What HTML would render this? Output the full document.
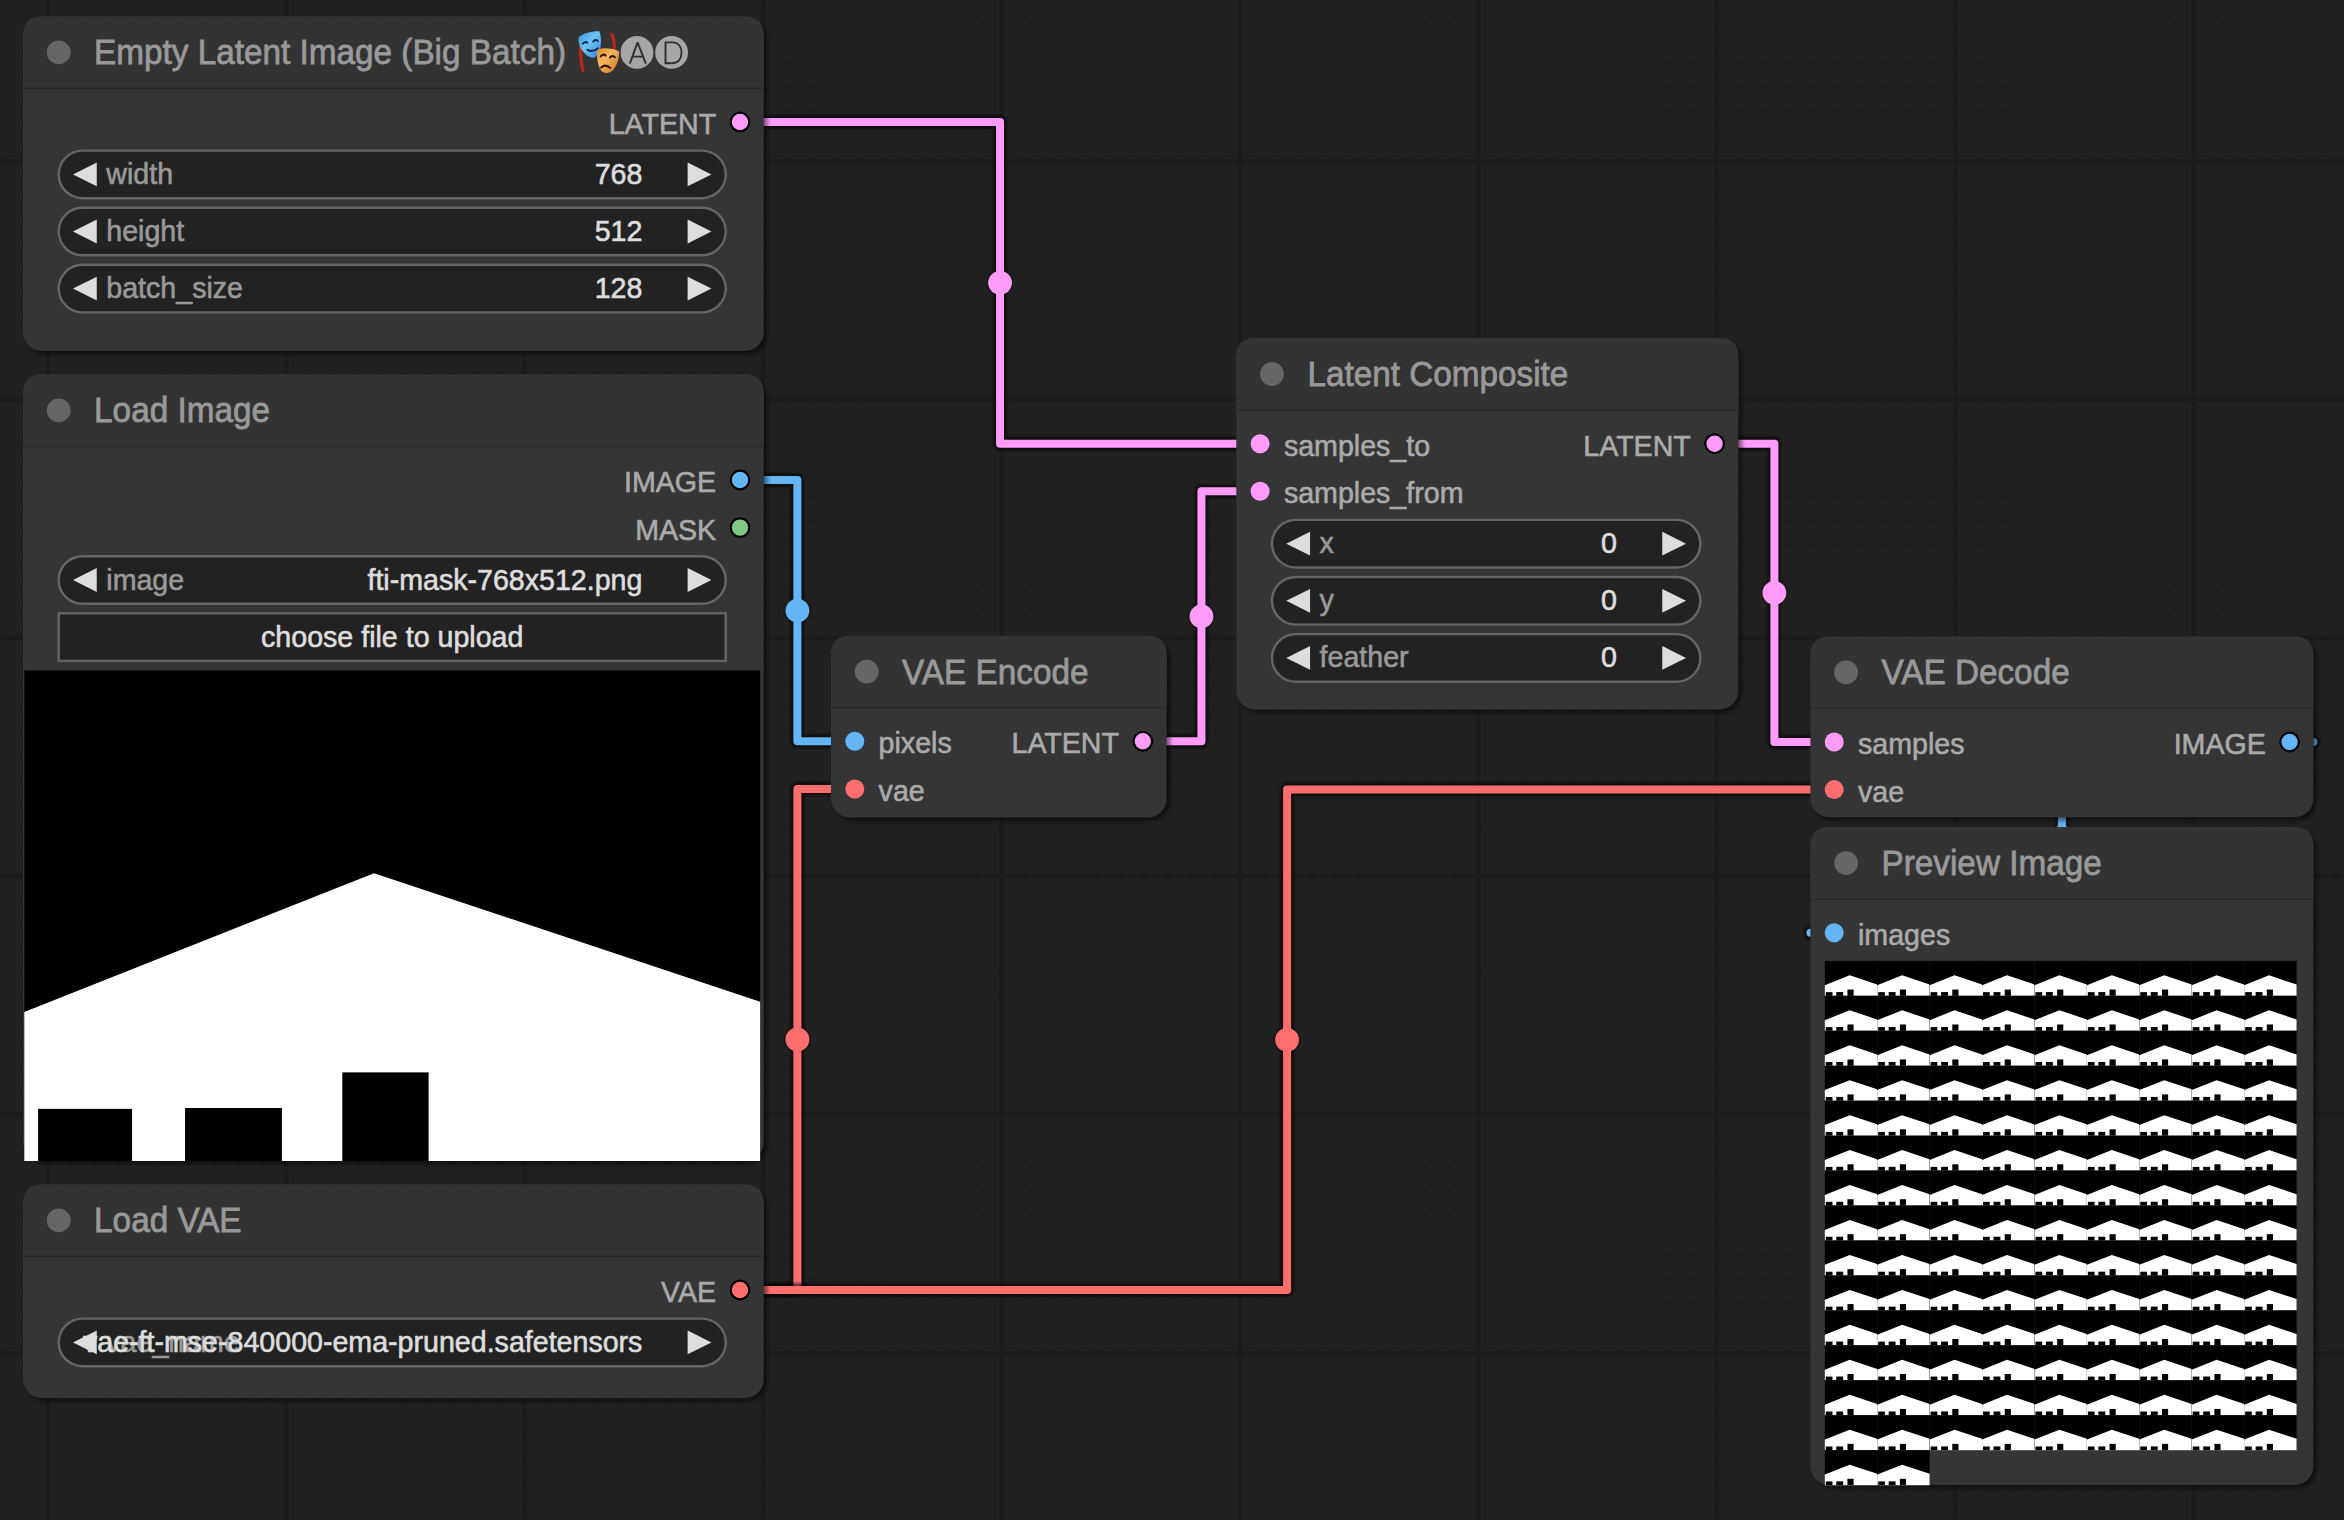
<!DOCTYPE html><html><head><meta charset="utf-8"><style>
html,body{margin:0;padding:0;width:2344px;height:1520px;overflow:hidden;background:#212121;}
body{position:relative;font-family:"Liberation Sans",sans-serif;}
.abs{position:absolute;}
.node{position:absolute;background:#353535;border-radius:19px;box-shadow:4px 4px 5px rgba(0,0,0,0.5);overflow:hidden;}
.ttl{position:absolute;left:0;top:0;right:0;background:#333333;border-bottom:2px solid #2c2c2c;box-sizing:border-box;}
.t{position:absolute;white-space:pre;line-height:1;}
svg{position:absolute;left:0;top:0;overflow:visible;}
</style></head><body>
<svg width="2344" height="1520" style="position:absolute;left:0;top:0">
<defs><filter id="ns" x="-10%" y="-10%" width="120%" height="120%"><feGaussianBlur stdDeviation="2.2"/></filter><pattern id="dots" x="44.5" y="157.5" width="23.84" height="23.84" patternUnits="userSpaceOnUse"><rect x="0" y="0" width="7" height="7" fill="#1c1c1c"/></pattern></defs>
<rect x="0" y="0" width="2344" height="1520" fill="url(#dots)" opacity="0.4"/>
<rect x="46" y="0" width="4" height="1520" fill="#1c1c1c"/>
<rect x="284.4" y="0" width="4" height="1520" fill="#1c1c1c"/>
<rect x="522.8" y="0" width="4" height="1520" fill="#1c1c1c"/>
<rect x="761.2" y="0" width="4" height="1520" fill="#1c1c1c"/>
<rect x="999.6" y="0" width="4" height="1520" fill="#1c1c1c"/>
<rect x="1238" y="0" width="4" height="1520" fill="#1c1c1c"/>
<rect x="1476.4" y="0" width="4" height="1520" fill="#1c1c1c"/>
<rect x="1714.8" y="0" width="4" height="1520" fill="#1c1c1c"/>
<rect x="1953.2" y="0" width="4" height="1520" fill="#1c1c1c"/>
<rect x="2191.6" y="0" width="4" height="1520" fill="#1c1c1c"/>
<rect x="0" y="159" width="2344" height="4" fill="#1c1c1c"/>
<rect x="0" y="397.4" width="2344" height="4" fill="#1c1c1c"/>
<rect x="0" y="635.8" width="2344" height="4" fill="#1c1c1c"/>
<rect x="0" y="874.2" width="2344" height="4" fill="#1c1c1c"/>
<rect x="0" y="1112.6" width="2344" height="4" fill="#1c1c1c"/>
<rect x="0" y="1351" width="2344" height="4" fill="#1c1c1c"/>
</svg>
<svg width="2344" height="1520"><defs><filter id="lb" x="-5%" y="-5%" width="110%" height="110%"><feGaussianBlur stdDeviation="0.9"/></filter></defs>
<g filter="url(#lb)"><path d="M740 122.02 L763.8 122.02 L1000.05 122.02 L1000.05 443.72 L1236.3 443.72 L1260.1 443.72" fill="none" stroke="rgba(0,0,0,0.55)" stroke-width="14" stroke-linejoin="round"/><circle cx="1000.05" cy="282.87" r="13.3" fill="rgba(0,0,0,0.35)"/></g>
<path d="M740 122.02 L763.8 122.02 L1000.05 122.02 L1000.05 443.72 L1236.3 443.72 L1260.1 443.72" fill="none" stroke="#ff9cf9" stroke-width="8" stroke-linejoin="round"/>
<circle cx="1000.05" cy="282.87" r="11.9" fill="#ff9cf9"/>
<g filter="url(#lb)"><path d="M740 480.02 L763.8 480.02 L797.4 480.02 L797.4 741.32 L831 741.32 L854.8 741.32" fill="none" stroke="rgba(0,0,0,0.55)" stroke-width="14" stroke-linejoin="round"/><circle cx="797.4" cy="610.67" r="13.3" fill="rgba(0,0,0,0.35)"/></g>
<path d="M740 480.02 L763.8 480.02 L797.4 480.02 L797.4 741.32 L831 741.32 L854.8 741.32" fill="none" stroke="#64b5f6" stroke-width="8" stroke-linejoin="round"/>
<circle cx="797.4" cy="610.67" r="11.9" fill="#64b5f6"/>
<g filter="url(#lb)"><path d="M740 1290.02 L763.8 1290.02 L797.4 1290.02 L797.4 788.92 L831 788.92 L854.8 788.92" fill="none" stroke="rgba(0,0,0,0.55)" stroke-width="14" stroke-linejoin="round"/><circle cx="797.4" cy="1039.47" r="13.3" fill="rgba(0,0,0,0.35)"/></g>
<path d="M740 1290.02 L763.8 1290.02 L797.4 1290.02 L797.4 788.92 L831 788.92 L854.8 788.92" fill="none" stroke="#ff6e6e" stroke-width="8" stroke-linejoin="round"/>
<circle cx="797.4" cy="1039.47" r="11.9" fill="#ff6e6e"/>
<g filter="url(#lb)"><path d="M740 1290.02 L763.8 1290.02 L1287.1 1290.02 L1287.1 789.62 L1810.4 789.62 L1834.2 789.62" fill="none" stroke="rgba(0,0,0,0.55)" stroke-width="14" stroke-linejoin="round"/><circle cx="1287.1" cy="1039.82" r="13.3" fill="rgba(0,0,0,0.35)"/></g>
<path d="M740 1290.02 L763.8 1290.02 L1287.1 1290.02 L1287.1 789.62 L1810.4 789.62 L1834.2 789.62" fill="none" stroke="#ff6e6e" stroke-width="8" stroke-linejoin="round"/>
<circle cx="1287.1" cy="1039.82" r="11.9" fill="#ff6e6e"/>
<g filter="url(#lb)"><path d="M1142.8 741.32 L1166.6 741.32 L1201.45 741.32 L1201.45 491.32 L1236.3 491.32 L1260.1 491.32" fill="none" stroke="rgba(0,0,0,0.55)" stroke-width="14" stroke-linejoin="round"/><circle cx="1201.45" cy="616.32" r="13.3" fill="rgba(0,0,0,0.35)"/></g>
<path d="M1142.8 741.32 L1166.6 741.32 L1201.45 741.32 L1201.45 491.32 L1236.3 491.32 L1260.1 491.32" fill="none" stroke="#ff9cf9" stroke-width="8" stroke-linejoin="round"/>
<circle cx="1201.45" cy="616.32" r="11.9" fill="#ff9cf9"/>
<g filter="url(#lb)"><path d="M1714.6 443.72 L1738.4 443.72 L1774.4 443.72 L1774.4 742.02 L1810.4 742.02 L1834.2 742.02" fill="none" stroke="rgba(0,0,0,0.55)" stroke-width="14" stroke-linejoin="round"/><circle cx="1774.4" cy="592.87" r="13.3" fill="rgba(0,0,0,0.35)"/></g>
<path d="M1714.6 443.72 L1738.4 443.72 L1774.4 443.72 L1774.4 742.02 L1810.4 742.02 L1834.2 742.02" fill="none" stroke="#ff9cf9" stroke-width="8" stroke-linejoin="round"/>
<circle cx="1774.4" cy="592.87" r="11.9" fill="#ff9cf9"/>
<g filter="url(#lb)"><path d="M2289.6 742.02 L2313.4 742.02 L2061.9 742.02 L2061.9 932.72 L1810.4 932.72 L1834.2 932.72" fill="none" stroke="rgba(0,0,0,0.55)" stroke-width="14" stroke-linejoin="round"/><circle cx="2061.9" cy="837.37" r="13.3" fill="rgba(0,0,0,0.35)"/></g>
<path d="M2289.6 742.02 L2313.4 742.02 L2061.9 742.02 L2061.9 932.72 L1810.4 932.72 L1834.2 932.72" fill="none" stroke="#64b5f6" stroke-width="8" stroke-linejoin="round"/>
<circle cx="2061.9" cy="837.37" r="11.9" fill="#64b5f6"/>
</svg>
<svg width="1" height="1">
<rect x="26.5" y="19.9" width="740.8" height="334.6" rx="19" fill="rgba(0,0,0,0.5)" filter="url(#ns)"/>
<rect x="23" y="16.4" width="740.8" height="334.6" rx="19" fill="#353535"/>
<path d="M23 88.7 L23 35.4 L23 35.4 Q23 16.4 42 16.4 L744.8 16.4 Q763.8 16.4 763.8 35.4 Z" fill="#333333"/>
<path d="M23 35.4 L763.8 35.4 L763.8 88.7 L23 88.7 Z" fill="#333333"/>
<rect x="23" y="87.5" width="740.8" height="2" fill="#2c2c2c"/>
</svg>
<svg width="1" height="1"><circle cx="58.7" cy="52.4" r="11.9" fill="#666"/></svg>
<svg width="1" height="1"><g transform="translate(94.1 64.3) scale(1 1.04)"><text x="0" y="0" font-family="Liberation Sans" font-size="33.3" fill="#999999" stroke="#999999" stroke-width="0.75" text-anchor="start" >Empty Latent Image (Big Batch)</text></g></svg>
<svg width="1" height="1"><circle cx="740" cy="122.02" r="9.3" fill="#ff9cf9" stroke="#000" stroke-width="2.2"/></svg>
<svg width="1" height="1"><text x="716.2" y="133.92" font-family="Liberation Sans" font-size="28.6" fill="#aaaaaa" stroke="#aaaaaa" stroke-width="0.6" text-anchor="end" >LATENT</text></svg>
<svg width="1" height="1">
<rect x="58.7" y="150.58" width="667.02" height="47.6" rx="23.8" fill="#222222" stroke="#666666" stroke-width="2.4"/>
<path d="M96.78 162.48 L72.98 174.38 L96.78 186.28 Z" fill="#dddddd"/>
<path d="M687.64 162.48 L711.44 174.38 L687.64 186.28 Z" fill="#dddddd"/>
</svg>
<svg width="1" height="1"><text x="106.3" y="183.9" font-family="Liberation Sans" font-size="28.6" fill="#999999" stroke="#999999" stroke-width="0.6" text-anchor="start" >width</text></svg>
<svg width="1" height="1"><text x="642.42" y="183.9" font-family="Liberation Sans" font-size="28.6" fill="#dddddd" stroke="#dddddd" stroke-width="0.6" text-anchor="end" >768</text></svg>
<svg width="1" height="1">
<rect x="58.7" y="207.7" width="667.02" height="47.6" rx="23.8" fill="#222222" stroke="#666666" stroke-width="2.4"/>
<path d="M96.78 219.6 L72.98 231.5 L96.78 243.4 Z" fill="#dddddd"/>
<path d="M687.64 219.6 L711.44 231.5 L687.64 243.4 Z" fill="#dddddd"/>
</svg>
<svg width="1" height="1"><text x="106.3" y="241.02" font-family="Liberation Sans" font-size="28.6" fill="#999999" stroke="#999999" stroke-width="0.6" text-anchor="start" >height</text></svg>
<svg width="1" height="1"><text x="642.42" y="241.02" font-family="Liberation Sans" font-size="28.6" fill="#dddddd" stroke="#dddddd" stroke-width="0.6" text-anchor="end" >512</text></svg>
<svg width="1" height="1">
<rect x="58.7" y="264.82" width="667.02" height="47.6" rx="23.8" fill="#222222" stroke="#666666" stroke-width="2.4"/>
<path d="M96.78 276.72 L72.98 288.62 L96.78 300.52 Z" fill="#dddddd"/>
<path d="M687.64 276.72 L711.44 288.62 L687.64 300.52 Z" fill="#dddddd"/>
</svg>
<svg width="1" height="1"><text x="106.3" y="298.14" font-family="Liberation Sans" font-size="28.6" fill="#999999" stroke="#999999" stroke-width="0.6" text-anchor="start" >batch_size</text></svg>
<svg width="1" height="1"><text x="642.42" y="298.14" font-family="Liberation Sans" font-size="28.6" fill="#dddddd" stroke="#dddddd" stroke-width="0.6" text-anchor="end" >128</text></svg>
<svg width="1" height="1">
<rect x="26.5" y="377.9" width="740.8" height="786.6" rx="19" fill="rgba(0,0,0,0.5)" filter="url(#ns)"/>
<rect x="23" y="374.4" width="740.8" height="786.6" rx="19" fill="#353535"/>
<path d="M23 446.7 L23 393.4 L23 393.4 Q23 374.4 42 374.4 L744.8 374.4 Q763.8 374.4 763.8 393.4 Z" fill="#333333"/>
<path d="M23 393.4 L763.8 393.4 L763.8 446.7 L23 446.7 Z" fill="#333333"/>
<rect x="23" y="445.5" width="740.8" height="2" fill="#2c2c2c"/>
</svg>
<svg width="1" height="1"><circle cx="58.7" cy="410.4" r="11.9" fill="#666"/></svg>
<svg width="1" height="1"><g transform="translate(94.1 422.3) scale(1 1.04)"><text x="0" y="0" font-family="Liberation Sans" font-size="33.3" fill="#999999" stroke="#999999" stroke-width="0.75" text-anchor="start" >Load Image</text></g></svg>
<svg width="1" height="1"><circle cx="740" cy="480.02" r="9.3" fill="#64b5f6" stroke="#000" stroke-width="2.2"/></svg>
<svg width="1" height="1"><text x="716.2" y="491.92" font-family="Liberation Sans" font-size="28.6" fill="#aaaaaa" stroke="#aaaaaa" stroke-width="0.6" text-anchor="end" >IMAGE</text></svg>
<svg width="1" height="1"><circle cx="740" cy="527.62" r="9.3" fill="#81c784" stroke="#000" stroke-width="2.2"/></svg>
<svg width="1" height="1"><text x="716.2" y="539.52" font-family="Liberation Sans" font-size="28.6" fill="#aaaaaa" stroke="#aaaaaa" stroke-width="0.6" text-anchor="end" >MASK</text></svg>
<svg width="1" height="1">
<rect x="58.7" y="556.18" width="667.02" height="47.6" rx="23.8" fill="#222222" stroke="#666666" stroke-width="2.4"/>
<path d="M96.78 568.08 L72.98 579.98 L96.78 591.88 Z" fill="#dddddd"/>
<path d="M687.64 568.08 L711.44 579.98 L687.64 591.88 Z" fill="#dddddd"/>
</svg>
<svg width="1" height="1"><text x="106.3" y="589.5" font-family="Liberation Sans" font-size="28.6" fill="#999999" stroke="#999999" stroke-width="0.6" text-anchor="start" >image</text></svg>
<svg width="1" height="1"><text x="642.42" y="589.5" font-family="Liberation Sans" font-size="28.6" fill="#dddddd" stroke="#dddddd" stroke-width="0.6" text-anchor="end" >fti-mask-768x512.png</text></svg>
<svg width="1" height="1"><rect x="58.7" y="613.3" width="667.02" height="47.6" fill="#222222" stroke="#666666" stroke-width="2.4"/></svg>
<svg width="1" height="1"><text x="392.21" y="646.62" font-family="Liberation Sans" font-size="28.6" fill="#dddddd" stroke="#dddddd" stroke-width="0.6" text-anchor="middle" >choose file to upload</text></svg>
<svg width="1" height="1"><g transform="translate(24.27 670.42) scale(0.95816)"><rect x="0" y="0" width="768" height="512" fill="#000"/><path d="M0 356.5 L365 211.7 L768 345.7 L768 512 L0 512 Z" fill="#fff"/><rect x="14.4" y="457.6" width="98.1" height="54.4" fill="#000"/><rect x="167.8" y="456.7" width="101.1" height="55.3" fill="#000"/><rect x="331.9" y="419.5" width="90.1" height="92.5" fill="#000"/></g></svg>
<svg width="1" height="1">
<rect x="26.5" y="1187.9" width="740.8" height="213.6" rx="19" fill="rgba(0,0,0,0.5)" filter="url(#ns)"/>
<rect x="23" y="1184.4" width="740.8" height="213.6" rx="19" fill="#353535"/>
<path d="M23 1256.7 L23 1203.4 L23 1203.4 Q23 1184.4 42 1184.4 L744.8 1184.4 Q763.8 1184.4 763.8 1203.4 Z" fill="#333333"/>
<path d="M23 1203.4 L763.8 1203.4 L763.8 1256.7 L23 1256.7 Z" fill="#333333"/>
<rect x="23" y="1255.5" width="740.8" height="2" fill="#2c2c2c"/>
</svg>
<svg width="1" height="1"><circle cx="58.7" cy="1220.4" r="11.9" fill="#666"/></svg>
<svg width="1" height="1"><g transform="translate(94.1 1232.3) scale(1 1.04)"><text x="0" y="0" font-family="Liberation Sans" font-size="33.3" fill="#999999" stroke="#999999" stroke-width="0.75" text-anchor="start" >Load VAE</text></g></svg>
<svg width="1" height="1"><circle cx="740" cy="1290.02" r="9.3" fill="#ff6e6e" stroke="#000" stroke-width="2.2"/></svg>
<svg width="1" height="1"><text x="716.2" y="1301.92" font-family="Liberation Sans" font-size="28.6" fill="#aaaaaa" stroke="#aaaaaa" stroke-width="0.6" text-anchor="end" >VAE</text></svg>
<svg width="1" height="1">
<rect x="58.7" y="1318.58" width="667.02" height="47.6" rx="23.8" fill="#222222" stroke="#666666" stroke-width="2.4"/>
<path d="M96.78 1330.48 L72.98 1342.38 L96.78 1354.28 Z" fill="#dddddd"/>
<path d="M687.64 1330.48 L711.44 1342.38 L687.64 1354.28 Z" fill="#dddddd"/>
</svg>
<svg width="1" height="1"><text x="106.3" y="1351.9" font-family="Liberation Sans" font-size="28.6" fill="#999999" stroke="#999999" stroke-width="0.6" text-anchor="start" >vae_name</text></svg>
<svg width="1" height="1"><text x="642.42" y="1351.9" font-family="Liberation Sans" font-size="28.6" fill="#dddddd" stroke="#dddddd" stroke-width="0.6" text-anchor="end" >vae-ft-mse-840000-ema-pruned.safetensors</text></svg>
<svg width="1" height="1">
<rect x="834.5" y="639.2" width="335.6" height="181.9" rx="19" fill="rgba(0,0,0,0.5)" filter="url(#ns)"/>
<rect x="831" y="635.7" width="335.6" height="181.9" rx="19" fill="#353535"/>
<path d="M831 708 L831 654.7 L831 654.7 Q831 635.7 850 635.7 L1147.6 635.7 Q1166.6 635.7 1166.6 654.7 Z" fill="#333333"/>
<path d="M831 654.7 L1166.6 654.7 L1166.6 708 L831 708 Z" fill="#333333"/>
<rect x="831" y="706.8" width="335.6" height="2" fill="#2c2c2c"/>
</svg>
<svg width="1" height="1"><circle cx="866.7" cy="671.7" r="11.9" fill="#666"/></svg>
<svg width="1" height="1"><g transform="translate(902.1 683.6) scale(1 1.04)"><text x="0" y="0" font-family="Liberation Sans" font-size="33.3" fill="#999999" stroke="#999999" stroke-width="0.75" text-anchor="start" >VAE Encode</text></g></svg>
<svg width="1" height="1"><circle cx="854.8" cy="741.32" r="9.5" fill="#64b5f6"/></svg>
<svg width="1" height="1"><text x="878.6" y="753.22" font-family="Liberation Sans" font-size="28.6" fill="#aaaaaa" stroke="#aaaaaa" stroke-width="0.6" text-anchor="start" >pixels</text></svg>
<svg width="1" height="1"><circle cx="854.8" cy="788.92" r="9.5" fill="#ff6e6e"/></svg>
<svg width="1" height="1"><text x="878.6" y="800.82" font-family="Liberation Sans" font-size="28.6" fill="#aaaaaa" stroke="#aaaaaa" stroke-width="0.6" text-anchor="start" >vae</text></svg>
<svg width="1" height="1"><circle cx="1142.8" cy="741.32" r="9.3" fill="#ff9cf9" stroke="#000" stroke-width="2.2"/></svg>
<svg width="1" height="1"><text x="1119" y="753.22" font-family="Liberation Sans" font-size="28.6" fill="#aaaaaa" stroke="#aaaaaa" stroke-width="0.6" text-anchor="end" >LATENT</text></svg>
<svg width="1" height="1">
<rect x="1239.8" y="341.6" width="502.1" height="371.4" rx="19" fill="rgba(0,0,0,0.5)" filter="url(#ns)"/>
<rect x="1236.3" y="338.1" width="502.1" height="371.4" rx="19" fill="#353535"/>
<path d="M1236.3 410.4 L1236.3 357.1 L1236.3 357.1 Q1236.3 338.1 1255.3 338.1 L1719.4 338.1 Q1738.4 338.1 1738.4 357.1 Z" fill="#333333"/>
<path d="M1236.3 357.1 L1738.4 357.1 L1738.4 410.4 L1236.3 410.4 Z" fill="#333333"/>
<rect x="1236.3" y="409.2" width="502.1" height="2" fill="#2c2c2c"/>
</svg>
<svg width="1" height="1"><circle cx="1272" cy="374.1" r="11.9" fill="#666"/></svg>
<svg width="1" height="1"><g transform="translate(1307.4 386) scale(1 1.04)"><text x="0" y="0" font-family="Liberation Sans" font-size="33.3" fill="#999999" stroke="#999999" stroke-width="0.75" text-anchor="start" >Latent Composite</text></g></svg>
<svg width="1" height="1"><circle cx="1260.1" cy="443.72" r="9.5" fill="#ff9cf9"/></svg>
<svg width="1" height="1"><text x="1283.9" y="455.62" font-family="Liberation Sans" font-size="28.6" fill="#aaaaaa" stroke="#aaaaaa" stroke-width="0.6" text-anchor="start" >samples_to</text></svg>
<svg width="1" height="1"><circle cx="1260.1" cy="491.32" r="9.5" fill="#ff9cf9"/></svg>
<svg width="1" height="1"><text x="1283.9" y="503.22" font-family="Liberation Sans" font-size="28.6" fill="#aaaaaa" stroke="#aaaaaa" stroke-width="0.6" text-anchor="start" >samples_from</text></svg>
<svg width="1" height="1"><circle cx="1714.6" cy="443.72" r="9.3" fill="#ff9cf9" stroke="#000" stroke-width="2.2"/></svg>
<svg width="1" height="1"><text x="1690.8" y="455.62" font-family="Liberation Sans" font-size="28.6" fill="#aaaaaa" stroke="#aaaaaa" stroke-width="0.6" text-anchor="end" >LATENT</text></svg>
<svg width="1" height="1">
<rect x="1272" y="519.88" width="428.32" height="47.6" rx="23.8" fill="#222222" stroke="#666666" stroke-width="2.4"/>
<path d="M1310.08 531.78 L1286.28 543.68 L1310.08 555.58 Z" fill="#dddddd"/>
<path d="M1662.24 531.78 L1686.04 543.68 L1662.24 555.58 Z" fill="#dddddd"/>
</svg>
<svg width="1" height="1"><text x="1319.6" y="553.2" font-family="Liberation Sans" font-size="28.6" fill="#999999" stroke="#999999" stroke-width="0.6" text-anchor="start" >x</text></svg>
<svg width="1" height="1"><text x="1617.02" y="553.2" font-family="Liberation Sans" font-size="28.6" fill="#dddddd" stroke="#dddddd" stroke-width="0.6" text-anchor="end" >0</text></svg>
<svg width="1" height="1">
<rect x="1272" y="577" width="428.32" height="47.6" rx="23.8" fill="#222222" stroke="#666666" stroke-width="2.4"/>
<path d="M1310.08 588.9 L1286.28 600.8 L1310.08 612.7 Z" fill="#dddddd"/>
<path d="M1662.24 588.9 L1686.04 600.8 L1662.24 612.7 Z" fill="#dddddd"/>
</svg>
<svg width="1" height="1"><text x="1319.6" y="610.32" font-family="Liberation Sans" font-size="28.6" fill="#999999" stroke="#999999" stroke-width="0.6" text-anchor="start" >y</text></svg>
<svg width="1" height="1"><text x="1617.02" y="610.32" font-family="Liberation Sans" font-size="28.6" fill="#dddddd" stroke="#dddddd" stroke-width="0.6" text-anchor="end" >0</text></svg>
<svg width="1" height="1">
<rect x="1272" y="634.12" width="428.32" height="47.6" rx="23.8" fill="#222222" stroke="#666666" stroke-width="2.4"/>
<path d="M1310.08 646.02 L1286.28 657.92 L1310.08 669.82 Z" fill="#dddddd"/>
<path d="M1662.24 646.02 L1686.04 657.92 L1662.24 669.82 Z" fill="#dddddd"/>
</svg>
<svg width="1" height="1"><text x="1319.6" y="667.44" font-family="Liberation Sans" font-size="28.6" fill="#999999" stroke="#999999" stroke-width="0.6" text-anchor="start" >feather</text></svg>
<svg width="1" height="1"><text x="1617.02" y="667.44" font-family="Liberation Sans" font-size="28.6" fill="#dddddd" stroke="#dddddd" stroke-width="0.6" text-anchor="end" >0</text></svg>
<svg width="1" height="1">
<rect x="1813.9" y="639.9" width="503" height="180.9" rx="19" fill="rgba(0,0,0,0.5)" filter="url(#ns)"/>
<rect x="1810.4" y="636.4" width="503" height="180.9" rx="19" fill="#353535"/>
<path d="M1810.4 708.7 L1810.4 655.4 L1810.4 655.4 Q1810.4 636.4 1829.4 636.4 L2294.4 636.4 Q2313.4 636.4 2313.4 655.4 Z" fill="#333333"/>
<path d="M1810.4 655.4 L2313.4 655.4 L2313.4 708.7 L1810.4 708.7 Z" fill="#333333"/>
<rect x="1810.4" y="707.5" width="503" height="2" fill="#2c2c2c"/>
</svg>
<svg width="1" height="1"><circle cx="1846.1" cy="672.4" r="11.9" fill="#666"/></svg>
<svg width="1" height="1"><g transform="translate(1881.5 684.3) scale(1 1.04)"><text x="0" y="0" font-family="Liberation Sans" font-size="33.3" fill="#999999" stroke="#999999" stroke-width="0.75" text-anchor="start" >VAE Decode</text></g></svg>
<svg width="1" height="1"><circle cx="1834.2" cy="742.02" r="9.5" fill="#ff9cf9"/></svg>
<svg width="1" height="1"><text x="1858" y="753.92" font-family="Liberation Sans" font-size="28.6" fill="#aaaaaa" stroke="#aaaaaa" stroke-width="0.6" text-anchor="start" >samples</text></svg>
<svg width="1" height="1"><circle cx="1834.2" cy="789.62" r="9.5" fill="#ff6e6e"/></svg>
<svg width="1" height="1"><text x="1858" y="801.52" font-family="Liberation Sans" font-size="28.6" fill="#aaaaaa" stroke="#aaaaaa" stroke-width="0.6" text-anchor="start" >vae</text></svg>
<svg width="1" height="1"><circle cx="2289.6" cy="742.02" r="9.3" fill="#64b5f6" stroke="#000" stroke-width="2.2"/></svg>
<svg width="1" height="1"><text x="2265.8" y="753.92" font-family="Liberation Sans" font-size="28.6" fill="#aaaaaa" stroke="#aaaaaa" stroke-width="0.6" text-anchor="end" >IMAGE</text></svg>
<svg width="1" height="1">
<rect x="1813.9" y="830.6" width="503" height="657.9" rx="19" fill="rgba(0,0,0,0.5)" filter="url(#ns)"/>
<rect x="1810.4" y="827.1" width="503" height="657.9" rx="19" fill="#353535"/>
<path d="M1810.4 899.4 L1810.4 846.1 L1810.4 846.1 Q1810.4 827.1 1829.4 827.1 L2294.4 827.1 Q2313.4 827.1 2313.4 846.1 Z" fill="#333333"/>
<path d="M1810.4 846.1 L2313.4 846.1 L2313.4 899.4 L1810.4 899.4 Z" fill="#333333"/>
<rect x="1810.4" y="898.2" width="503" height="2" fill="#2c2c2c"/>
</svg>
<svg width="1" height="1"><circle cx="1846.1" cy="863.1" r="11.9" fill="#666"/></svg>
<svg width="1" height="1"><g transform="translate(1881.5 875) scale(1 1.04)"><text x="0" y="0" font-family="Liberation Sans" font-size="33.3" fill="#999999" stroke="#999999" stroke-width="0.75" text-anchor="start" >Preview Image</text></g></svg>
<svg width="1" height="1"><circle cx="1834.2" cy="932.72" r="9.5" fill="#64b5f6"/></svg>
<svg width="1" height="1"><text x="1858" y="944.62" font-family="Liberation Sans" font-size="28.6" fill="#aaaaaa" stroke="#aaaaaa" stroke-width="0.6" text-anchor="start" >images</text></svg>
<svg width="1" height="1"><defs><g id="tile"><g transform="scale(0.068255)"><rect x="0" y="0" width="768" height="512" fill="#000"/><path d="M0 356.5 L365 211.7 L768 345.7 L768 512 L0 512 Z" fill="#fff"/><rect x="14.4" y="457.6" width="98.1" height="54.4" fill="#000"/><rect x="167.8" y="456.7" width="101.1" height="55.3" fill="#000"/><rect x="331.9" y="419.5" width="90.1" height="92.5" fill="#000"/></g></g></defs>
<use href="#tile" x="1824.8" y="960.9"/>
<use href="#tile" x="1877.22" y="960.9"/>
<use href="#tile" x="1929.64" y="960.9"/>
<use href="#tile" x="1982.06" y="960.9"/>
<use href="#tile" x="2034.48" y="960.9"/>
<use href="#tile" x="2086.9" y="960.9"/>
<use href="#tile" x="2139.32" y="960.9"/>
<use href="#tile" x="2191.74" y="960.9"/>
<use href="#tile" x="2244.16" y="960.9"/>
<use href="#tile" x="1824.8" y="995.85"/>
<use href="#tile" x="1877.22" y="995.85"/>
<use href="#tile" x="1929.64" y="995.85"/>
<use href="#tile" x="1982.06" y="995.85"/>
<use href="#tile" x="2034.48" y="995.85"/>
<use href="#tile" x="2086.9" y="995.85"/>
<use href="#tile" x="2139.32" y="995.85"/>
<use href="#tile" x="2191.74" y="995.85"/>
<use href="#tile" x="2244.16" y="995.85"/>
<use href="#tile" x="1824.8" y="1030.8"/>
<use href="#tile" x="1877.22" y="1030.8"/>
<use href="#tile" x="1929.64" y="1030.8"/>
<use href="#tile" x="1982.06" y="1030.8"/>
<use href="#tile" x="2034.48" y="1030.8"/>
<use href="#tile" x="2086.9" y="1030.8"/>
<use href="#tile" x="2139.32" y="1030.8"/>
<use href="#tile" x="2191.74" y="1030.8"/>
<use href="#tile" x="2244.16" y="1030.8"/>
<use href="#tile" x="1824.8" y="1065.75"/>
<use href="#tile" x="1877.22" y="1065.75"/>
<use href="#tile" x="1929.64" y="1065.75"/>
<use href="#tile" x="1982.06" y="1065.75"/>
<use href="#tile" x="2034.48" y="1065.75"/>
<use href="#tile" x="2086.9" y="1065.75"/>
<use href="#tile" x="2139.32" y="1065.75"/>
<use href="#tile" x="2191.74" y="1065.75"/>
<use href="#tile" x="2244.16" y="1065.75"/>
<use href="#tile" x="1824.8" y="1100.7"/>
<use href="#tile" x="1877.22" y="1100.7"/>
<use href="#tile" x="1929.64" y="1100.7"/>
<use href="#tile" x="1982.06" y="1100.7"/>
<use href="#tile" x="2034.48" y="1100.7"/>
<use href="#tile" x="2086.9" y="1100.7"/>
<use href="#tile" x="2139.32" y="1100.7"/>
<use href="#tile" x="2191.74" y="1100.7"/>
<use href="#tile" x="2244.16" y="1100.7"/>
<use href="#tile" x="1824.8" y="1135.65"/>
<use href="#tile" x="1877.22" y="1135.65"/>
<use href="#tile" x="1929.64" y="1135.65"/>
<use href="#tile" x="1982.06" y="1135.65"/>
<use href="#tile" x="2034.48" y="1135.65"/>
<use href="#tile" x="2086.9" y="1135.65"/>
<use href="#tile" x="2139.32" y="1135.65"/>
<use href="#tile" x="2191.74" y="1135.65"/>
<use href="#tile" x="2244.16" y="1135.65"/>
<use href="#tile" x="1824.8" y="1170.6"/>
<use href="#tile" x="1877.22" y="1170.6"/>
<use href="#tile" x="1929.64" y="1170.6"/>
<use href="#tile" x="1982.06" y="1170.6"/>
<use href="#tile" x="2034.48" y="1170.6"/>
<use href="#tile" x="2086.9" y="1170.6"/>
<use href="#tile" x="2139.32" y="1170.6"/>
<use href="#tile" x="2191.74" y="1170.6"/>
<use href="#tile" x="2244.16" y="1170.6"/>
<use href="#tile" x="1824.8" y="1205.55"/>
<use href="#tile" x="1877.22" y="1205.55"/>
<use href="#tile" x="1929.64" y="1205.55"/>
<use href="#tile" x="1982.06" y="1205.55"/>
<use href="#tile" x="2034.48" y="1205.55"/>
<use href="#tile" x="2086.9" y="1205.55"/>
<use href="#tile" x="2139.32" y="1205.55"/>
<use href="#tile" x="2191.74" y="1205.55"/>
<use href="#tile" x="2244.16" y="1205.55"/>
<use href="#tile" x="1824.8" y="1240.5"/>
<use href="#tile" x="1877.22" y="1240.5"/>
<use href="#tile" x="1929.64" y="1240.5"/>
<use href="#tile" x="1982.06" y="1240.5"/>
<use href="#tile" x="2034.48" y="1240.5"/>
<use href="#tile" x="2086.9" y="1240.5"/>
<use href="#tile" x="2139.32" y="1240.5"/>
<use href="#tile" x="2191.74" y="1240.5"/>
<use href="#tile" x="2244.16" y="1240.5"/>
<use href="#tile" x="1824.8" y="1275.45"/>
<use href="#tile" x="1877.22" y="1275.45"/>
<use href="#tile" x="1929.64" y="1275.45"/>
<use href="#tile" x="1982.06" y="1275.45"/>
<use href="#tile" x="2034.48" y="1275.45"/>
<use href="#tile" x="2086.9" y="1275.45"/>
<use href="#tile" x="2139.32" y="1275.45"/>
<use href="#tile" x="2191.74" y="1275.45"/>
<use href="#tile" x="2244.16" y="1275.45"/>
<use href="#tile" x="1824.8" y="1310.4"/>
<use href="#tile" x="1877.22" y="1310.4"/>
<use href="#tile" x="1929.64" y="1310.4"/>
<use href="#tile" x="1982.06" y="1310.4"/>
<use href="#tile" x="2034.48" y="1310.4"/>
<use href="#tile" x="2086.9" y="1310.4"/>
<use href="#tile" x="2139.32" y="1310.4"/>
<use href="#tile" x="2191.74" y="1310.4"/>
<use href="#tile" x="2244.16" y="1310.4"/>
<use href="#tile" x="1824.8" y="1345.35"/>
<use href="#tile" x="1877.22" y="1345.35"/>
<use href="#tile" x="1929.64" y="1345.35"/>
<use href="#tile" x="1982.06" y="1345.35"/>
<use href="#tile" x="2034.48" y="1345.35"/>
<use href="#tile" x="2086.9" y="1345.35"/>
<use href="#tile" x="2139.32" y="1345.35"/>
<use href="#tile" x="2191.74" y="1345.35"/>
<use href="#tile" x="2244.16" y="1345.35"/>
<use href="#tile" x="1824.8" y="1380.3"/>
<use href="#tile" x="1877.22" y="1380.3"/>
<use href="#tile" x="1929.64" y="1380.3"/>
<use href="#tile" x="1982.06" y="1380.3"/>
<use href="#tile" x="2034.48" y="1380.3"/>
<use href="#tile" x="2086.9" y="1380.3"/>
<use href="#tile" x="2139.32" y="1380.3"/>
<use href="#tile" x="2191.74" y="1380.3"/>
<use href="#tile" x="2244.16" y="1380.3"/>
<use href="#tile" x="1824.8" y="1415.25"/>
<use href="#tile" x="1877.22" y="1415.25"/>
<use href="#tile" x="1929.64" y="1415.25"/>
<use href="#tile" x="1982.06" y="1415.25"/>
<use href="#tile" x="2034.48" y="1415.25"/>
<use href="#tile" x="2086.9" y="1415.25"/>
<use href="#tile" x="2139.32" y="1415.25"/>
<use href="#tile" x="2191.74" y="1415.25"/>
<use href="#tile" x="2244.16" y="1415.25"/>
<use href="#tile" x="1824.8" y="1450.2"/>
<use href="#tile" x="1877.22" y="1450.2"/>
</svg>
<svg width="1" height="1">
<defs>
<linearGradient id="gb" x1="0" y1="0" x2="1" y2="1"><stop offset="0" stop-color="#3a8ee6"/><stop offset="0.45" stop-color="#6cc4f5"/><stop offset="1" stop-color="#2f7fd6"/></linearGradient>
<linearGradient id="go" x1="0" y1="0" x2="1" y2="1"><stop offset="0" stop-color="#d98a2a"/><stop offset="0.4" stop-color="#f5b860"/><stop offset="1" stop-color="#c8701e"/></linearGradient>
</defs>
<path d="M580.6 47 C580.2 55 581.2 63 583 70.5" stroke="#b8261a" stroke-width="3.2" fill="none" stroke-linecap="round"/>
<path d="M611.8 34.5 C613.8 39 614.8 44 614.3 50" stroke="#b8261a" stroke-width="3.2" fill="none" stroke-linecap="round"/>
<path d="M578.6 37.5 C582 33.5 592 31 599.5 31.3 C601.5 37 601.5 45 599.8 50.5 C598.2 55.5 595 58 592.5 57.8 C586 56.5 580.5 50 579 43.5 C578.5 41 578.4 39 578.6 37.5 Z" fill="url(#gb)"/>
<path d="M582.8 43.8 Q585.2 40.8 587.4 42.9" stroke="#0e2748" stroke-width="1.9" fill="none" stroke-linecap="round"/>
<path d="M593.2 41.6 Q595.6 38.8 597.7 41" stroke="#0e2748" stroke-width="1.9" fill="none" stroke-linecap="round"/>
<path d="M587.5 49.8 Q592.8 52.6 597.8 48.4" stroke="#0e2748" stroke-width="2" fill="none" stroke-linecap="round"/>
<path d="M597.2 50 C602 47.3 612 47.8 619 51.5 C619.5 58 617 66.5 612 71 C608.5 73.8 603.5 73.5 601 70.5 C597.8 66 596.5 57 597.2 50 Z" fill="url(#go)"/>
<path d="M600.8 56.3 Q603 53.3 605.6 55.6" stroke="#2a1204" stroke-width="2" fill="none" stroke-linecap="round"/>
<path d="M610 57.5 Q612.4 54.8 614.8 57.3" stroke="#2a1204" stroke-width="2" fill="none" stroke-linecap="round"/>
<path d="M601.3 67.4 Q605.2 63.6 610 67.8" stroke="#2a1204" stroke-width="2.1" fill="none" stroke-linecap="round"/>
<circle cx="637" cy="52.4" r="16.4" fill="#a6a6a6"/>
<circle cx="671.6" cy="52.4" r="16.4" fill="#a6a6a6"/>
<path d="M629.8 63.6 L637.6 42.4 L645.8 63.6 M632.6 56.6 L643 56.6" stroke="#2e2e2e" stroke-width="1.9" fill="none" stroke-linejoin="bevel"/>
<path d="M665.5 42.4 L665.5 63.2 L672 63.2 C678.5 63.2 681.5 58.5 681.5 52.8 C681.5 47 678.5 42.4 672 42.4 Z" stroke="#2e2e2e" stroke-width="1.9" fill="none"/>
</svg>
</body></html>
